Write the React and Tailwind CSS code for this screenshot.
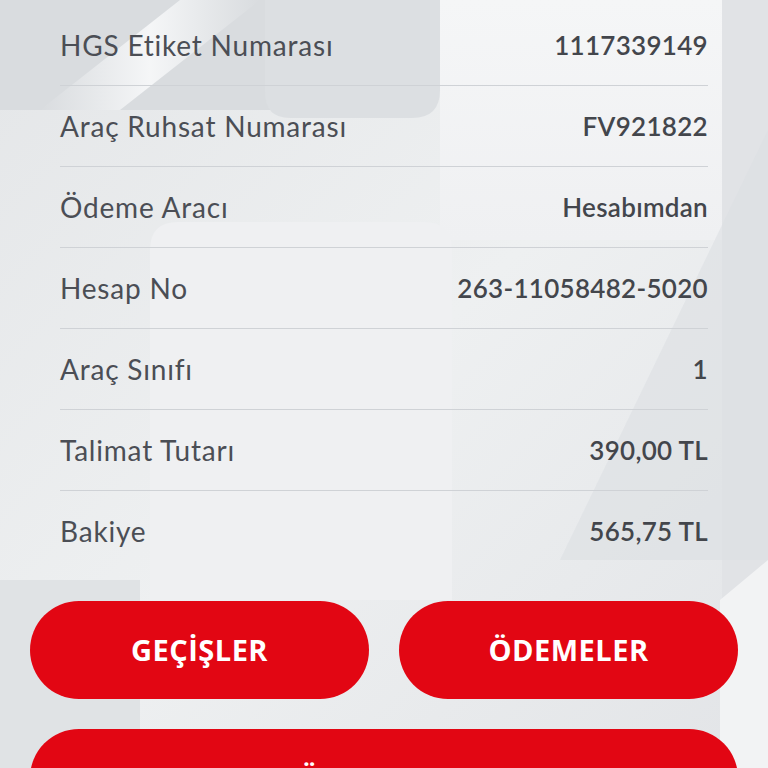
import React from "react";

const rows = [
  { label: "HGS Etiket Numarası", value: "1117339149" },
  { label: "Araç Ruhsat Numarası", value: "FV921822" },
  { label: "Ödeme Aracı", value: "Hesabımdan" },
  { label: "Hesap No", value: "263-11058482-5020" },
  { label: "Araç Sınıfı", value: "1" },
  { label: "Talimat Tutarı", value: "390,00 TL" },
  { label: "Bakiye", value: "565,75 TL" },
];

const Backdrop = () => (
  <svg className="absolute inset-0 w-full h-full" viewBox="0 0 768 768" preserveAspectRatio="none">
    <defs>
      <linearGradient id="base" x1="0" y1="0" x2="1" y2="1">
        <stop offset="0" stopColor="#e4e6e8" />
        <stop offset="0.5" stopColor="#eef0f1" />
        <stop offset="1" stopColor="#e2e4e7" />
      </linearGradient>
      <linearGradient id="shine" x1="0" y1="0" x2="1" y2="0">
        <stop offset="0" stopColor="#f6f7f8" stopOpacity="0" />
        <stop offset="0.5" stopColor="#f8f9fa" stopOpacity="0.9" />
        <stop offset="1" stopColor="#f6f7f8" stopOpacity="0" />
      </linearGradient>
      <linearGradient id="topright" x1="0" y1="0" x2="0" y2="1">
        <stop offset="0" stopColor="#f5f6f7" />
        <stop offset="1" stopColor="#eff0f2" />
      </linearGradient>
    </defs>
    <rect width="768" height="768" fill="url(#base)" />
    <polygon points="0,0 270,0 270,110 0,110" fill="#d9dcdf" />
    <polygon points="40,110 180,0 260,0 120,110" fill="url(#shine)" />
    <path d="M265 0 H440 V90 Q440 118 412 118 H290 Q265 118 265 92 Z" fill="#dcdfe2" />
    <rect x="440" y="0" width="282" height="240" fill="url(#topright)" />
    <rect x="722" y="0" width="46" height="768" fill="#e1e3e6" />
    <path d="M150 600 V250 Q150 222 178 222 H424 Q452 222 452 250 V600 Z" fill="#eff0f2" />
    <polygon points="768,130 768,560 560,560" fill="#dcdfe2" opacity="0.6" />
    <polygon points="0,580 140,580 140,768 0,768" fill="#e0e3e5" />
    <polygon points="720,600 768,560 768,768 720,768" fill="#f2f3f4" />
  </svg>
);

const btn = "h-[98px] rounded-full bg-[#e20613] text-white text-[29px] font-bold tracking-[0.5px]";

export default function App() {
  return (
    <div className="relative w-[768px] h-[768px] overflow-hidden bg-[#e8eaec]" style={{ fontFamily: "Lato, 'Noto Sans', sans-serif" }}>
      <Backdrop />
      <div className="relative flex flex-col">
        <div className="px-[60px] pt-[5px]">
          {rows.map((r, i) => (
            <div
              key={r.label}
              className={`flex items-center justify-between h-[80px] box-content ${i < rows.length - 1 ? "border-b border-[#cfd2d6]" : ""}`}
            >
              <span className="text-[28px] text-[#4b4e55] tracking-[0.8px]">{r.label}</span>
              <span className="text-[26px] font-semibold text-[#43464c] tracking-[0.3px]">{r.value}</span>
            </div>
          ))}
        </div>
        <div className="px-[30px] pt-[30px] grid grid-cols-2 gap-[30px]" style={{ fontFamily: "'Open Sans', sans-serif" }}>
          <button className={btn}>GEÇİŞLER</button>
          <button className={btn}>ÖDEMELER</button>
          <button className={`${btn} col-span-2`}>ÖDEME YAP</button>
        </div>
      </div>
    </div>
  );
}
